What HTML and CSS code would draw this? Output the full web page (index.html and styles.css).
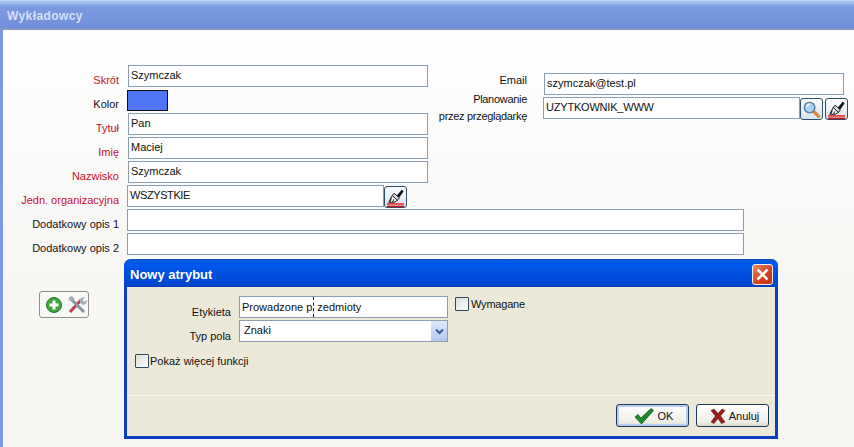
FILE: index.html
```html
<!DOCTYPE html>
<html lang="pl">
<head>
    <meta charset="UTF-8">
    <meta name="viewport" content="width=device-width, initial-scale=1.0">
    <title>Wykładowcy</title>
    <link rel="stylesheet" href="styles.css">
</head>
<body>
    <svg class="defs" width="0" height="0">
        <symbol id="brush" viewBox="0 0 22 21">
            <path d="M12.500 8.500 17.500 2.500l2 1.500-4.500 6.500z" fill="#111"/>
            <path d="M9.500 6 15 11l-2 2.500L7.500 8.500z" fill="#ddd" stroke="#111"/>
            <path d="M7.500 8.500 13 13.500 9.500 15.500H4z" fill="#fff" stroke="#111"/>
            <path d="M6.500 11 5.500 15M9 12.500 8 15.500" stroke="#111" fill="none"/>
            <path d="M2 16.500h18V18H2z" fill="#e81c1c"/>
            <path d="M2 19h18v1.500H2z" fill="#c81414"/>
        </symbol>
    </svg>

    <div class="window">
        <div class="window-title">Wykładowcy</div>

        <div class="window-body">
            <div class="columns">
                <div class="col-left">
                    <div class="row">
                        <div class="label required">Skrót</div>
                        <div class="field field-short">Szymczak</div>
                    </div>
                    <div class="row row-tight">
                        <div class="label">Kolor</div>
                        <div class="swatch"></div>
                    </div>
                    <div class="row">
                        <div class="label required">Tytuł</div>
                        <div class="field field-short">Pan</div>
                    </div>
                    <div class="row">
                        <div class="label required">Imię</div>
                        <div class="field field-short">Maciej</div>
                    </div>
                    <div class="row">
                        <div class="label required">Nazwisko</div>
                        <div class="field field-short">Szymczak</div>
                    </div>
                    <div class="row row-tight">
                        <div class="label required">Jedn. organizacyjna</div>
                        <div class="field field-unit">WSZYSTKIE</div>
                        <button class="icon-btn icon-btn-low" type="button"><svg width="22" height="21"><use href="#brush"/></svg></button>
                    </div>
                </div>

                <div class="col-right">
                    <div class="row-right">
                        <div class="label-right">Email</div>
                        <div class="field field-email">szymczak@test.pl</div>
                    </div>
                    <div class="row-right">
                        <div class="label-right label-two">Planowanie<br>przez przeglądarkę</div>
                        <div class="field field-plan">UZYTKOWNIK_WWW</div>
                        <button class="icon-btn icon-btn-low" type="button">
                            <svg width="22" height="21" viewBox="0 0 22 21">
                                <path d="M13 12.500l5.500 5" stroke="#d98a3a" stroke-width="3.500" stroke-linecap="round"/>
                                <circle cx="9" cy="8.500" r="5.500" fill="#a8d4f2" stroke="#5a7f9c" stroke-width="1.500"/>
                                <path d="M6 7.500a3.500 3.500 0 0 1 3-2.500" stroke="#fff" stroke-width="1.500" fill="none"/>
                            </svg>
                        </button>
                        <button class="icon-btn icon-btn-low icon-btn-last" type="button"><svg width="22" height="21"><use href="#brush"/></svg></button>
                    </div>
                </div>
            </div>

            <div class="row row-tight">
                <div class="label">Dodatkowy opis 1</div>
                <div class="field field-wide"></div>
            </div>
            <div class="row row-tight">
                <div class="label">Dodatkowy opis 2</div>
                <div class="field field-wide"></div>
            </div>

            <div class="toolbox">
                <svg width="20" height="20" viewBox="0 0 20 20">
                    <circle cx="9" cy="10" r="7.500" fill="#3fa63f" stroke="#1f7a2a"/>
                    <path d="M9 5.500v9M4.500 10h9" stroke="#fff" stroke-width="3"/>
                </svg>
                <svg width="20" height="20" viewBox="0 0 20 20">
                    <path d="M3 17 14 5" stroke="#b8404a" stroke-width="3"/>
                    <path d="M4 4l13 13" stroke="#8c949c" stroke-width="3"/>
                    <path d="M2 2.500 5 1l2.500 3-3 3-3-2.500z" fill="#a4acb4"/>
                    <path d="M12.500 6.500c0-3 2.500-5 5.500-4l-2.500 2.500 2 2 2.500-2c.5 3-2 5.500-5 4.500z" fill="#a4acb4"/>
                </svg>
            </div>
        </div>
    </div>

    <div class="dialog">
        <div class="dialog-title">
            <span>Nowy atrybut</span>
            <div class="close-btn">
                <svg width="21" height="21" viewBox="0 0 21 21">
                    <path d="M5.500 5.500l10 10M15.500 5.500l-10 10" stroke="#fff" stroke-width="2.500"/>
                </svg>
            </div>
        </div>

        <div class="dialog-body">
            <div class="dialog-form">
                <div class="dialog-row">
                    <div class="dialog-label">Etykieta</div>
                    <div class="field field-dialog">Prowadzone p<span class="caret">r</span>zedmioty</div>
                    <div class="check check-side"></div>
                    <div class="check-text check-text-side">Wymagane</div>
                </div>
                <div class="dialog-row">
                    <div class="dialog-label">Typ pola</div>
                    <div class="field field-dialog field-select">
                        <span>Znaki</span>
                        <div class="select-arrow">
                            <svg width="9" height="7" viewBox="0 0 9 7">
                                <path d="M1 1.500l3.500 3.500L8 1.500" stroke="#3b5a9a" stroke-width="2" fill="none"/>
                            </svg>
                        </div>
                    </div>
                </div>
                <div class="more-row">
                    <div class="check"></div>
                    <div class="check-text">Pokaż więcej funkcji</div>
                </div>
            </div>

            <div class="dialog-footer">
                <button class="btn btn-default" type="button">
                    <svg width="24" height="18" viewBox="0 0 24 18">
                        <path d="M3 10l3-2.500 3 3.500L19 1.500l2.500 2L9.500 17z" fill="#1f8a2e" stroke="#0f5c1c" stroke-width=".8"/>
                    </svg>
                    OK
                </button>
                <button class="btn btn-cancel" type="button">
                    <svg width="16" height="16" viewBox="0 0 16 16">
                        <path d="M1 2.500 4 1l4 4.500L12 1l3 1.500L10.500 8l4.500 6-3.500 1.500L8 10.500 4 15.500 1 14l4.500-6z" fill="#9c1c1c" stroke="#6e1010" stroke-width=".6"/>
                    </svg>
                    Anuluj
                </button>
            </div>
        </div>
    </div>
</body>
</html>
```

FILE: styles.css
```css
html, body {
    margin: 0;
    padding: 0;
}
body {
    width: 854px;
    height: 447px;
    overflow: hidden;
    position: relative;
    font-family: "Liberation Sans", Arial, sans-serif;
    font-size: 11px;
    color: #111;
    background: #fff;
}
.defs {
    position: absolute;
}
.window {
    height: 447px;
    box-sizing: border-box;
    border-left: 3px solid #7c9ae0;
    background: linear-gradient(to bottom, #fefefe 60px, #f7f6f3 300px);
}
.window-title {
    height: 30px;
    margin-left: -3px;
    box-sizing: border-box;
    padding: 8px 0 0 7px;
    font-size: 12px;
    font-weight: bold;
    letter-spacing: .4px;
    line-height: 16px;
    color: #d5e1f7;
    background: linear-gradient(to bottom, #dfe8f8 0, #a6c1f0 1px, #a0bcee 3px, #7d9be0 6px, #7594dc 20px, #6f8fd8 28px, #8b9bbb 29px);
}
.window-body {
    padding-top: 35px;
}
.columns {
    display: flex;
}
.col-left {
    width: 425px;
}
.col-right {
    padding-top: 8px;
    margin-left: -5px;
}
.row {
    display: flex;
    height: 24px;
}
.row-tight .label {
    margin-right: 8px;
}
.label {
    width: 116px;
    margin-right: 9px;
    padding-top: 8px;
    line-height: 14px;
    text-align: right;
    white-space: nowrap;
}
.required {
    color: #c8102e;
}
.field {
    height: 22px;
    box-sizing: border-box;
    border: 1px solid #8c9fb0;
    padding-left: 2px;
    background: #fff;
    line-height: 18px;
    white-space: nowrap;
}
.field-short {
    width: 300px;
}
.field-unit {
    width: 257px;
    letter-spacing: -.4px;
}
.field-wide {
    width: 617px;
}
.swatch {
    width: 41px;
    height: 21px;
    margin-top: 1px;
    box-sizing: border-box;
    border: 1px solid #111;
    background: #4f74f5;
}
.row-right {
    display: flex;
    height: 24px;
}
.label-right {
    width: 104px;
    margin-right: 17px;
    line-height: 14px;
    text-align: right;
    white-space: nowrap;
}
.label-two {
    margin-right: 16px;
    margin-top: -6px;
    line-height: 17px;
    letter-spacing: -.3px;
}
.field-email {
    width: 300px;
}
.field-plan {
    width: 257px;
    letter-spacing: -.2px;
}
.icon-btn {
    width: 23px;
    height: 22px;
    box-sizing: border-box;
    padding: 0;
    border: 1px solid #2f4f66;
    border-radius: 3px;
    background: linear-gradient(to bottom, #fbfcfd, #d8e4ec);
    flex: none;
    display: flex;
    align-items: center;
    justify-content: center;
}
.icon-btn-low {
    margin-top: 1px;
}
.icon-btn-last {
    margin-left: 2px;
}
.toolbox {
    width: 50px;
    height: 27px;
    margin: 34px 0 0 36px;
    box-sizing: border-box;
    border: 1px solid #8f8f8f;
    border-radius: 3px;
    padding-left: 3px;
    display: flex;
    align-items: center;
    justify-content: center;
    gap: 2px;
    background: #f8f8f6;
}
.dialog {
    position: absolute;
    left: 124px;
    top: 259px;
    width: 654px;
    height: 180px;
    box-sizing: border-box;
    border: 3px solid #0a3ec0;
    border-top: none;
    border-radius: 7px 7px 0 0;
    background: #ece9d8;
}
.dialog-title {
    height: 28px;
    margin: 0 -3px;
    padding: 2px 5px 0 6px;
    box-sizing: border-box;
    display: flex;
    align-items: center;
    justify-content: space-between;
    font-size: 13px;
    font-weight: bold;
    color: #fff;
    border-radius: 7px 7px 0 0;
    background: linear-gradient(to bottom, #0a4fc4 0, #0a5ae0 2px, #0058ee 5px, #0050e0 14px, #0048d4 24px, #0a40b8 28px);
}
.close-btn {
    width: 21px;
    height: 21px;
    box-sizing: border-box;
    border: 1px solid #f4f0ee;
    border-radius: 3px;
    display: flex;
    align-items: center;
    justify-content: center;
    background: linear-gradient(135deg, #ec8a6c, #d4441e 55%, #c23010);
}
.close-btn svg {
    flex: none;
}
.dialog-body {
    height: 149px;
    display: flex;
    flex-direction: column;
}
.dialog-form {
    height: 109px;
    padding-top: 9px;
    box-sizing: border-box;
    border-bottom: 1px solid #f7f6ef;
}
.dialog-row {
    display: flex;
    height: 24px;
}
.dialog-label {
    width: 104px;
    margin-right: 8px;
    padding-top: 9px;
    line-height: 14px;
    text-align: right;
}
.field-dialog {
    width: 209px;
    line-height: 20px;
}
.field-select {
    display: flex;
    justify-content: space-between;
    padding-left: 4px;
    line-height: 18px;
}
.select-arrow {
    width: 16px;
    height: 20px;
    display: flex;
    align-items: center;
    justify-content: center;
    background: linear-gradient(to bottom, #dfe8fb, #b4c8f2);
}
.caret {
    display: inline-block;
    width: 3px;
    color: transparent;
    border-left: 1px dashed #111;
    margin-left: 1px;
}
.check {
    width: 14px;
    height: 14px;
    flex: none;
    box-sizing: border-box;
    border: 1px solid #2c4a60;
    border-radius: 1px;
    background: linear-gradient(135deg, #dcdcd4, #fff);
}
.check-side {
    margin: 1px 1px 0 7px;
}
.check-text {
    line-height: 14px;
    margin-left: 1px;
}
.check-text-side {
    margin-top: 1px;
    letter-spacing: -.2px;
}
.more-row {
    display: flex;
    margin: 10px 0 0 8px;
}
.dialog-footer {
    display: flex;
    justify-content: flex-end;
    gap: 7px;
    padding: 8px 6px 0 0;
}
.btn {
    width: 73px;
    height: 23px;
    box-sizing: border-box;
    padding: 0;
    border: 1px solid #1c3a5c;
    border-radius: 3px;
    background: linear-gradient(to bottom, #fff, #f0efe6 80%, #dcd8c8);
    font-family: inherit;
    font-size: 11px;
    color: #111;
    display: flex;
    align-items: center;
    justify-content: center;
    gap: 2px;
}
.btn-default {
    box-shadow: inset 0 0 0 2px #b8cdf0;
}
.btn-cancel {
    padding-left: 4px;
    gap: 3px;
}
```
